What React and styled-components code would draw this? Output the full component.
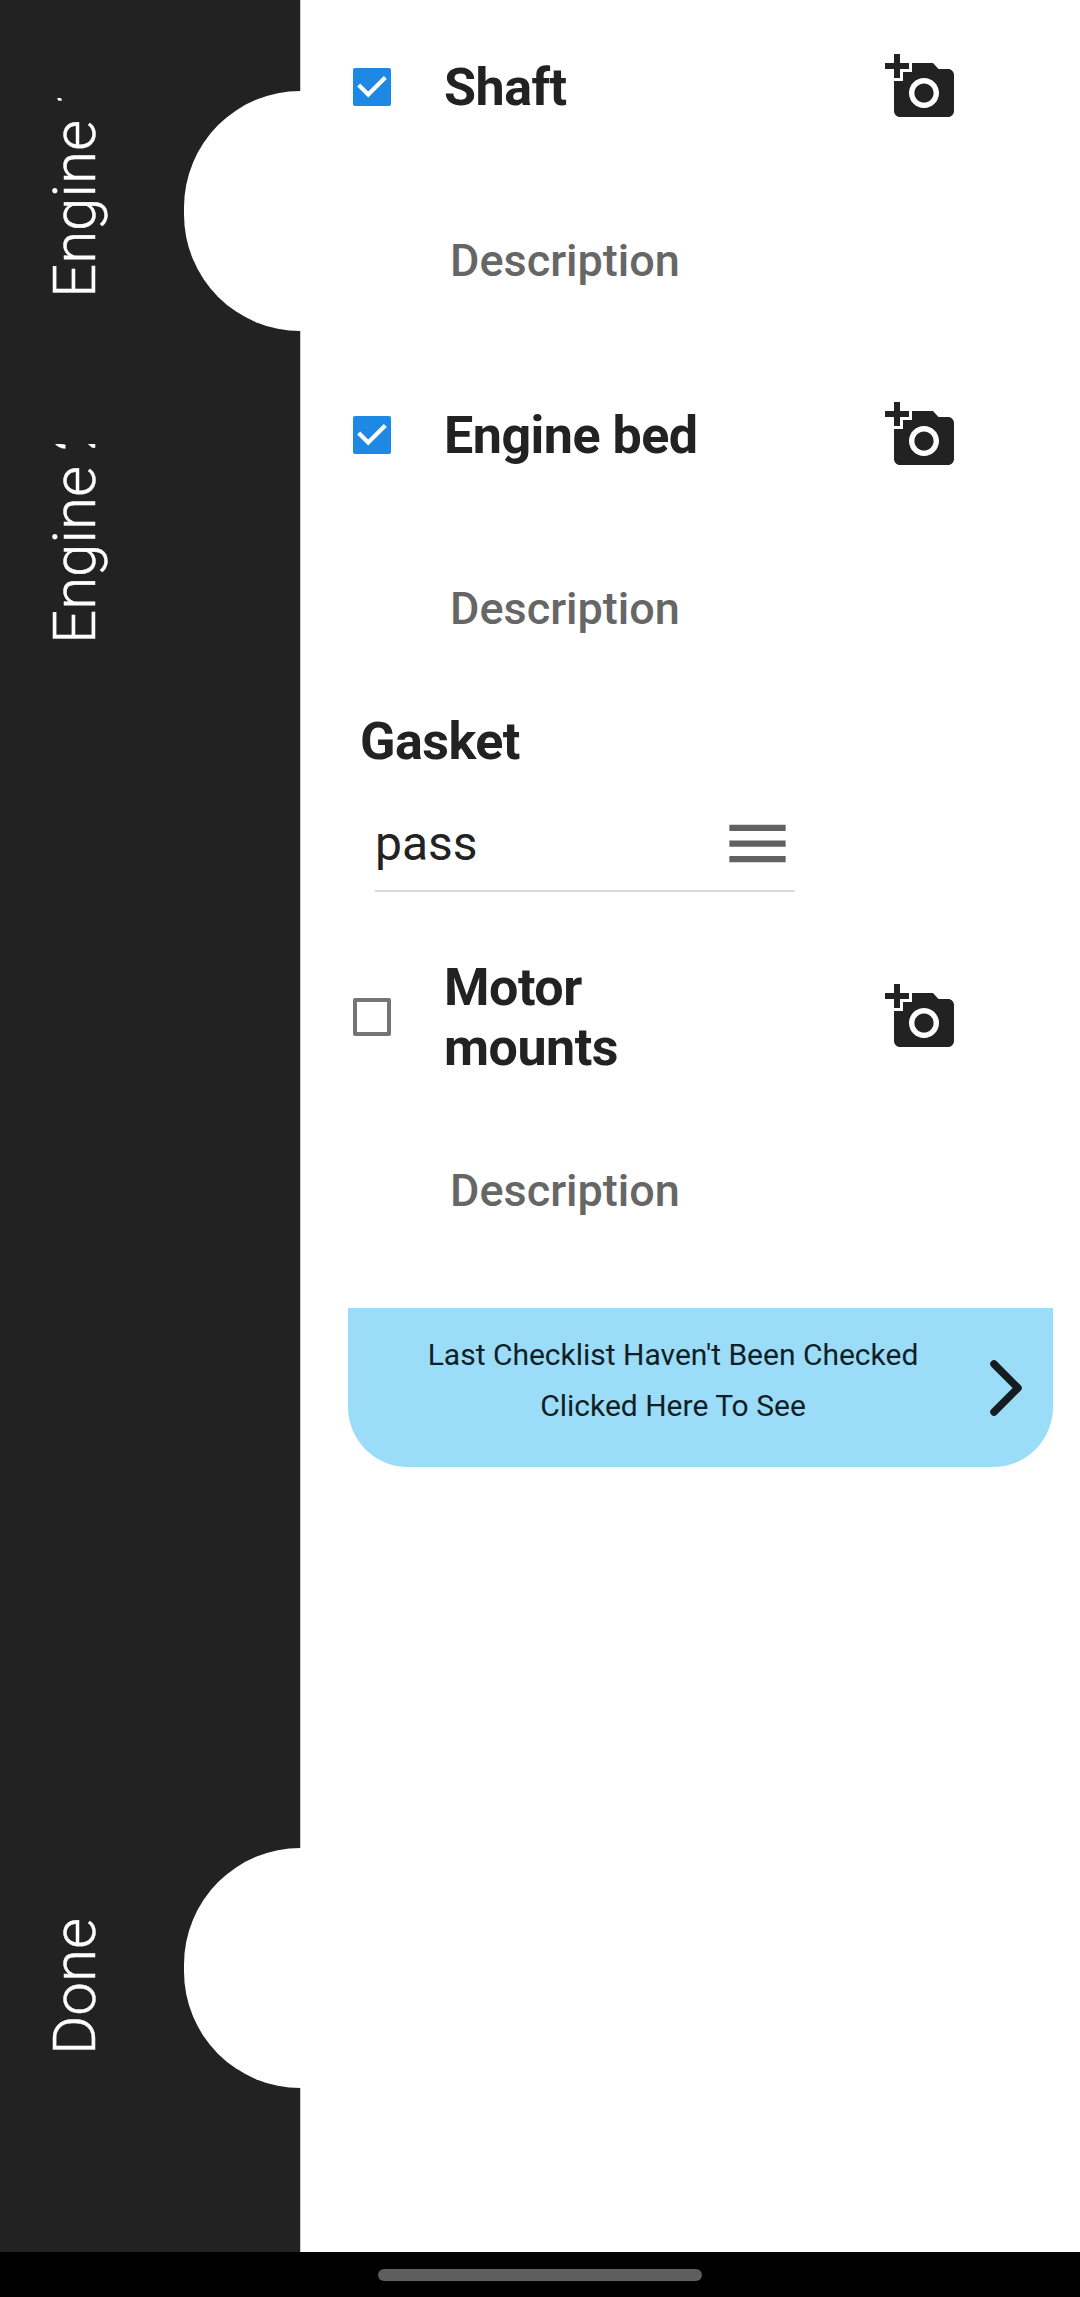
import React from "react";
import styled, { createGlobalStyle } from "styled-components";

const GlobalStyle = createGlobalStyle`
  *, *::before, *::after { box-sizing: border-box; }
  html, body { margin: 0; padding: 0; background: #fff; }
  body { font-family: Roboto, "Noto Sans", sans-serif; color: #222; }
  button { font: inherit; color: inherit; border: 0; background: none; padding: 0; }
`;

const Screen = styled.div`
  display: flex;
  flex-direction: column;
  width: 1080px;
  height: 2297px;
  overflow: hidden;
`;

const Body = styled.div`
  display: flex;
  flex: 1;
  min-height: 0;
`;

const Sidebar = styled.nav`
  display: flex;
  flex-direction: column;
  width: 301px;
  flex: none;
  padding: 38px 0 111px;
  background: linear-gradient(to right, #222 300px, #c9c9c9 300px);
`;

const Tab = styled.div`
  display: flex;
  align-items: center;
  justify-content: space-between;
  height: 346px;
  margin-top: ${(p) => (p.$last ? "auto" : "0")};
`;

const TabLabel = styled.span`
  writing-mode: vertical-rl;
  transform: rotate(180deg);
  height: 200px;
  margin-left: 39px;
  margin-bottom: 26px;
  overflow: hidden;
  white-space: nowrap;
  font-size: 60px;
  font-weight: 300;
  line-height: 72px;
  color: #fff;
  -webkit-text-stroke: 0.4px #fff;
`;

const Notch = styled.span`
  width: 117.5px;
  height: 240px;
  background: #fff;
  border-radius: 116.5px 0 0 116.5px;
`;

const Content = styled.main`
  display: flex;
  flex-direction: column;
  flex: 1;
  padding: 27px 27px 0 47px;
`;

const Item = styled.section`
  display: flex;
  flex-direction: column;
  justify-content: space-between;
  height: 264px;
  margin-bottom: ${(p) => p.$gap}px;
`;

const ItemHeader = styled.div`
  display: grid;
  grid-template-columns: 38px 250px 72px;
  grid-template-rows: 120px;
  column-gap: 53px;
  align-items: center;
  height: 120px;
  padding-left: 5px;
`;

const Photo = styled.button`
  display: flex;
  width: 72px;
  height: 72px;
  margin-left: 138px;
`;

const Title = styled.h2`
  margin: 0;
  padding-top: ${(p) => (p.$wrap ? 2 : 1)}px;
  font-size: 52px;
  font-weight: 700;
  line-height: 60px;
  letter-spacing: -0.5px;
  white-space: ${(p) => (p.$wrap ? "normal" : "nowrap")};
  padding-left: ${(p) => p.$inset || 0}px;
`;

const Box = styled.span`
  display: flex;
  width: 38px;
  height: 38px;
  border-radius: 2px;
  border: ${(p) => (p.$on ? "0" : "4px solid #757575")};
  background: ${(p) => (p.$on ? "#1e88e5" : "transparent")};
`;

const Description = styled.div`
  padding-left: 102px;
  font-size: 45px;
  font-weight: 500;
  line-height: 60px;
  color: #666;
`;

const Select = styled.div`
  display: flex;
  align-items: center;
  justify-content: space-between;
  width: 420px;
  height: 95px;
  margin: 25px 0 65px 27px;
  border-bottom: 2px solid #dcdcdc;
  font-size: 48px;
`;

const Banner = styled.button`
  display: flex;
  align-items: center;
  gap: 32px;
  width: 705px;
  height: 159px;
  padding-left: 40px;
  border-radius: 0 0 60px 60px;
  background: #9bdcf8;
`;

const BannerText = styled.span`
  width: 570px;
  padding-bottom: 16px;
  font-size: 30px;
  line-height: 51px;
  text-align: center;
  color: #101f26;
`;

const Line = styled.span`
  display: block;
  white-space: nowrap;
`;

const SystemBar = styled.footer`
  display: flex;
  justify-content: center;
  flex: none;
  height: 45px;
  padding-top: 17px;
  background: #000;
`;

const Handle = styled.span`
  width: 324px;
  height: 12px;
  border-radius: 6px;
  background: #5e5e5e;
`;

const CameraIcon = () => (
  <svg width="72" height="72" viewBox="0 0 24 24" fill="#222">
    <path d="M3 4V1h2v3h3v2H5v3H3V6H0V4h3zm3 6V7h3V4h7l1.83 2H21c1.1 0 2 .9 2 2v12c0 1.1-.9 2-2 2H5c-1.1 0-2-.9-2-2V10h3zm7 9c2.76 0 5-2.24 5-5s-2.24-5-5-5-5 2.24-5 5 2.24 5 5 5zm-3.2-5c0 1.77 1.43 3.2 3.2 3.2s3.2-1.43 3.2-3.2-1.43-3.2-3.2-3.2-3.2 1.43-3.2 3.2z" />
  </svg>
);

const MenuIcon = () => (
  <svg width="75" height="75" viewBox="0 0 24 24" fill="#616161">
    <path d="M3 18h18v-2H3v2zm0-5h18v-2H3v2zm0-7v2h18V6H3z" />
  </svg>
);

const Chevron = () => (
  <svg width="32" height="56" viewBox="0 0 32 56" fill="none">
    <path d="M4 4L28 28L4 52" stroke="#161d20" strokeWidth="7.5" strokeLinecap="round" strokeLinejoin="round" />
  </svg>
);

const Checkbox = ({ checked }) => (
  <Box $on={checked}>
    {checked && (
      <svg width="38" height="38" viewBox="0 0 38 38" fill="none">
        <path d="M5.7 17.1L15.2 26.6L32.3 9.5" stroke="#fff" strokeWidth="4.2" />
      </svg>
    )}
  </Box>
);

const ChecklistItem = ({ title, checked, wrap, gap }) => (
  <Item $gap={gap}>
    <ItemHeader>
      <Checkbox checked={checked} />
      <Title $wrap={wrap}>{title}</Title>
      <Photo aria-label="Add photo">
        <CameraIcon />
      </Photo>
    </ItemHeader>
    <Description>Description</Description>
  </Item>
);

export default function App() {
  return (
    <Screen>
      <GlobalStyle />
      <Body>
        <Sidebar>
          <Tab>
            <TabLabel>Engine 1</TabLabel>
            <Notch />
          </Tab>
          <Tab>
            <TabLabel>Engine 2</TabLabel>
          </Tab>
          <Tab $last>
            <TabLabel>Done</TabLabel>
            <Notch />
          </Tab>
        </Sidebar>
        <Content>
          <ChecklistItem title="Shaft" checked gap={84} />
          <ChecklistItem title="Engine bed" checked gap={72} />
          <Title $inset={12}>Gasket</Title>
          <Select>
            pass
            <MenuIcon />
          </Select>
          <ChecklistItem title="Motor mounts" wrap gap={87} />
          <Banner>
            <BannerText>
              <Line>Last Checklist Haven't Been Checked</Line>
              <Line>Clicked Here To See</Line>
            </BannerText>
            <Chevron />
          </Banner>
        </Content>
      </Body>
      <SystemBar>
        <Handle />
      </SystemBar>
    </Screen>
  );
}
